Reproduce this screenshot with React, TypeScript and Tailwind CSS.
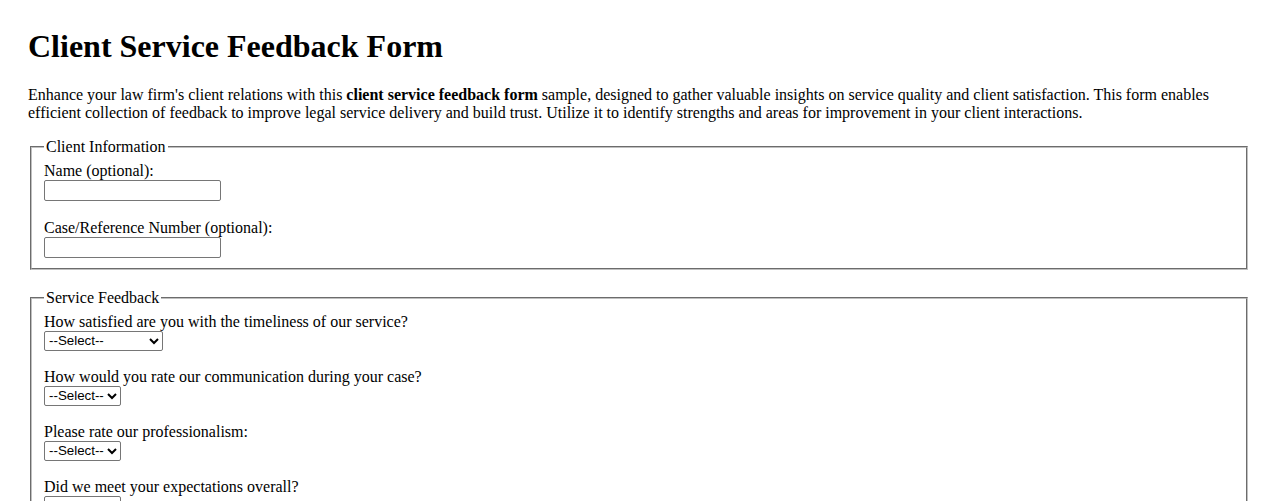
import React from "react";

const serif = "font-['Liberation_Serif','Times_New_Roman',serif]";
const controlFont = "font-['Liberation_Sans',Arial,sans-serif] text-[13.33px]";

const fieldsetCls =
  "mx-[2px] border-2 [border-style:groove] border-[#c0c0c0] px-[12px] pt-[5.6px] pb-[10px] min-w-0";
const legendCls = "px-[2px] leading-[normal]";

const SATISFACTION = ["Very Satisfied", "Satisfied", "Neutral", "Dissatisfied", "Very Dissatisfied"];
const RATING = ["Excellent", "Good", "Fair", "Poor"];
const YESNO = ["Yes", "Partially", "No"];

function TextField({ label, id }: { label: string; id: string }) {
  return (
    <div className="flex flex-col items-start">
      <label htmlFor={id} className="leading-[normal]">
        {label}
      </label>
      <input
        id={id}
        type="text"
        className={`${controlFont} w-[177px] h-[21px] px-[2px] py-[1px] bg-white border border-[#767676] rounded-[2px]`}
      />
    </div>
  );
}

function SelectField({
  label,
  id,
  options,
  width,
}: {
  label: string;
  id: string;
  options: string[];
  width: string;
}) {
  return (
    <div className="flex flex-col items-start">
      <label htmlFor={id} className="leading-[normal]">
        {label}
      </label>
      <select
        id={id}
        defaultValue=""
        className={`${controlFont} ${width} h-[20px] bg-white border border-[#767676] rounded-[2px] text-black`}
      >
        <option value="">--Select--</option>
        {options.map((o) => (
          <option key={o} value={o}>
            {o}
          </option>
        ))}
      </select>
    </div>
  );
}

export default function App() {
  return (
    <div className={`${serif} text-black bg-white min-h-screen px-[28px] pt-[28px] text-[16px]`}>
      <h1 className="text-[32px] font-bold leading-[37px] mb-[21px]">Client Service Feedback Form</h1>
      <p className="leading-[normal] mb-[16px]">
        Enhance your law firm's client relations with this <strong>client service feedback form</strong> sample,
        designed to gather valuable insights on service quality and client satisfaction. This form enables
        efficient collection of feedback to improve legal service delivery and build trust. Utilize it to
        identify strengths and areas for improvement in your client interactions.
      </p>

      <form>
        <fieldset className={`${fieldsetCls} mb-[19px]`}>
          <legend className={legendCls}>Client Information</legend>
          <div className="flex flex-col gap-[18.4px]">
            <TextField id="name" label="Name (optional):" />
            <TextField id="caseRef" label="Case/Reference Number (optional):" />
          </div>
        </fieldset>

        <fieldset className={fieldsetCls}>
          <legend className={legendCls}>Service Feedback</legend>
          <div className="flex flex-col gap-[17px]">
            <SelectField
              id="timeliness"
              label="How satisfied are you with the timeliness of our service?"
              options={SATISFACTION}
              width="w-[119px]"
            />
            <SelectField
              id="communication"
              label="How would you rate our communication during your case?"
              options={RATING}
              width="w-[77px]"
            />
            <SelectField
              id="professionalism"
              label="Please rate our professionalism:"
              options={RATING}
              width="w-[77px]"
            />
            <SelectField
              id="expectations"
              label="Did we meet your expectations overall?"
              options={YESNO}
              width="w-[77px]"
            />
          </div>
        </fieldset>
      </form>
    </div>
  );
}
